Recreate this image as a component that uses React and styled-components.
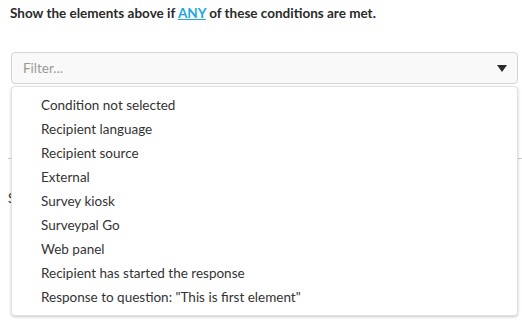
import styled, { createGlobalStyle } from "styled-components";

const Global = createGlobalStyle`
  html, body {
    margin: 0;
    padding: 0;
    background: #fff;
    font-family: Lato, "Open Sans", sans-serif;
    color: #333;
  }
`;

const Page = styled.div`
  width: 522px;
  height: 321px;
  overflow: hidden;
  padding: 0 4px 0 10px;
  box-sizing: border-box;
`;

const Heading = styled.h4`
  margin: 0;
  padding-top: 4px;
  font-size: 13.5px;
  font-weight: 700;
  line-height: 18px;
  color: #2a2a2a;
`;

const AnyLink = styled.a`
  color: #1ea7e1;
  text-decoration: underline;
`;

const SelectWrap = styled.div`
  position: relative;
  margin-top: 30px;
  margin-left: 1px;
`;

const Control = styled.div`
  height: 32px;
  box-sizing: border-box;
  border: 1px solid #d4d4d4;
  border-radius: 4px;
  background: #f9f9f9;
  display: flex;
  align-items: center;
  justify-content: space-between;
  padding: 0 10px 0 11px;
`;

const Placeholder = styled.span`
  font-size: 13.5px;
  color: #999;
`;

const Caret = styled.span`
  width: 0;
  height: 0;
  border-left: 5px solid transparent;
  border-right: 5px solid transparent;
  border-top: 7px solid #2b2b2b;
`;

const Behind = styled.div`
  padding-top: 74px;
  margin-left: -3px;
`;

const Divider = styled.hr`
  margin: 0;
  border: 0;
  border-top: 1px solid #ccc;
  width: 530px;
`;

const HiddenText = styled.div`
  margin-top: 31px;
  font-size: 13.5px;
  color: #333;
`;

const Menu = styled.ul`
  position: absolute;
  top: 34px;
  left: 0;
  right: 0;
  margin: 0;
  padding: 6px 0 6px;
  list-style: none;
  background: #fff;
  border: 1px solid #e2e2e2;
  border-radius: 4px;
  box-shadow: 0 1px 3px rgba(0, 0, 0, 0.22);
`;

const Item = styled.li`
  height: 24px;
  line-height: 24px;
  padding-left: 29px;
  font-size: 13.5px;
  color: #333;
  white-space: nowrap;
`;

const options = [
  "Condition not selected",
  "Recipient language",
  "Recipient source",
  "External",
  "Survey kiosk",
  "Surveypal Go",
  "Web panel",
  "Recipient has started the response",
  'Response to question: "This is first element"',
];

export default function App() {
  return (
    <Page>
      <Global />
      <Heading>
        Show the elements above if <AnyLink>ANY</AnyLink> of these conditions are met.
      </Heading>
      <SelectWrap>
        <Control>
          <Placeholder>Filter...</Placeholder>
          <Caret />
        </Control>
        <Behind>
          <Divider />
          <HiddenText>Show</HiddenText>
        </Behind>
        <Menu>
          {options.map((o) => (
            <Item key={o}>{o}</Item>
          ))}
        </Menu>
      </SelectWrap>
    </Page>
  );
}
